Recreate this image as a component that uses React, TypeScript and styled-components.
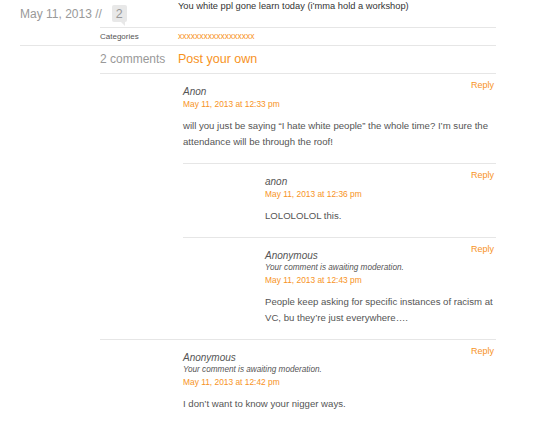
import React from 'react';
import styled, { createGlobalStyle } from 'styled-components';

const GlobalStyle = createGlobalStyle`
  body {
    margin: 0;
    background: #fff;
    font-family: "Liberation Sans", Arial, sans-serif;
    color: #555;
  }
`;

const orange = '#f7931e';
const rule = '#e6e6e6';

const Page = styled.div`
  width: 476px;
  margin-left: 20px;
`;

const PostBlock = styled.div`
  border-bottom: 1px solid ${rule};
`;

const PostHeader = styled.div`
  display: grid;
  grid-template-columns: 158px 1fr;
  height: 27px;
`;

const DateLine = styled.div`
  display: flex;
  align-items: center;
  gap: 10px;
`;

const PostDate = styled.span`
  font-size: 12px;
  color: #999;
`;

const Badge = styled.span`
  position: relative;
  display: inline-flex;
  align-items: center;
  justify-content: center;
  width: 15px;
  height: 17px;
  background: #e8e8e8;
  border-radius: 2px;
  font-size: 12.5px;
  color: #999;

  &::after {
    content: '';
    position: absolute;
    right: 2px;
    bottom: -4px;
    border-top: 4px solid #e8e8e8;
    border-left: 4px solid transparent;
  }
`;

const PostTitle = styled.div`
  font-size: 9.3px;
  line-height: 12px;
  color: #333;
`;

const MetaRow = styled.div<{ $height: number }>`
  display: grid;
  grid-template-columns: 78px 1fr;
  margin-left: 80px;
  border-top: 1px solid ${rule};
  height: ${({ $height }) => $height}px;
  line-height: ${({ $height }) => $height}px;
`;

const MetaLabel = styled.span<{ $size: number }>`
  font-size: ${({ $size }) => $size}px;
  color: ${({ $size }) => ($size > 10 ? '#999' : '#555')};
`;

const MetaValue = styled.span<{ $size: number }>`
  font-size: ${({ $size }) => $size}px;
  color: ${orange};
`;

const CommentsHeader = styled.div`
  display: grid;
  grid-template-columns: 78px 1fr;
  margin-left: 80px;
  height: 27px;
  line-height: 27px;
  border-bottom: 1px solid ${rule};
`;

const CommentList = styled.div`
  margin-left: 80px;
`;

const Thread = styled.div`
  padding-left: 83px;
  border-bottom: 1px solid ${rule};

  &:last-child {
    border-bottom: none;
  }
`;

const ChildComment = styled.div`
  border-top: 1px solid ${rule};
  padding-left: 82px;
`;

const CommentBox = styled.div`
  padding: 5px 0 13px;
`;

const CommentHead = styled.div`
  display: flex;
  justify-content: space-between;
  align-items: flex-start;
`;

const Meta = styled.div`
  padding-top: 6px;
  display: flex;
  flex-direction: column;
`;

const Author = styled.span`
  font-size: 10px;
  line-height: 13px;
  font-style: italic;
  color: #555;
`;

const Moderation = styled.span`
  font-size: 8.2px;
  line-height: 12px;
  font-style: italic;
  color: #555;
`;

const Stamp = styled.span`
  font-size: 8.4px;
  line-height: 12px;
  color: ${orange};
`;

const Reply = styled.span`
  font-size: 9px;
  line-height: 12px;
  color: ${orange};
  margin-right: 2px;
`;

const Body = styled.p`
  margin: 8px 0 0;
  font-size: 9.6px;
  line-height: 16px;
  color: #555;
`;

type CommentData = {
  author: string;
  pending?: boolean;
  date: string;
  text: string;
};

const Comment: React.FC<{ c: CommentData }> = ({ c }) => (
  <CommentBox>
    <CommentHead>
      <Meta>
        <Author>{c.author}</Author>
        {c.pending && <Moderation>Your comment is awaiting moderation.</Moderation>}
        <Stamp>{c.date}</Stamp>
      </Meta>
      <Reply>Reply</Reply>
    </CommentHead>
    <Body>{c.text}</Body>
  </CommentBox>
);

const threads: { root: CommentData; children: CommentData[] }[] = [
  {
    root: {
      author: 'Anon',
      date: 'May 11, 2013 at 12:33 pm',
      text: 'will you just be saying \u201cI hate white people\u201d the whole time? I\u2019m sure the attendance will be through the roof!',
    },
    children: [
      { author: 'anon', date: 'May 11, 2013 at 12:36 pm', text: 'LOLOLOLOL this.' },
      {
        author: 'Anonymous',
        pending: true,
        date: 'May 11, 2013 at 12:43 pm',
        text: 'People keep asking for specific instances of racism at VC, bu they\u2019re just everywhere\u2026.',
      },
    ],
  },
  {
    root: {
      author: 'Anonymous',
      pending: true,
      date: 'May 11, 2013 at 12:42 pm',
      text: 'I don\u2019t want to know your nigger ways.',
    },
    children: [],
  },
];

export default function App() {
  return (
    <Page>
      <GlobalStyle />
      <PostBlock>
        <PostHeader>
          <DateLine>
            <PostDate>May 11, 2013 //</PostDate>
            <Badge>2</Badge>
          </DateLine>
          <PostTitle>You white ppl gone learn today (i&rsquo;mma hold a workshop)</PostTitle>
        </PostHeader>
        <MetaRow $height={17}>
          <MetaLabel $size={8}>Categories</MetaLabel>
          <MetaValue $size={8.5}>xxxxxxxxxxxxxxxxxx</MetaValue>
        </MetaRow>
      </PostBlock>
      <CommentsHeader>
        <MetaLabel $size={12}>2 comments</MetaLabel>
        <MetaValue $size={12.5}>Post your own</MetaValue>
      </CommentsHeader>
      <CommentList>
        {threads.map((t, i) => (
          <Thread key={i}>
            <Comment c={t.root} />
            {t.children.map((ch, j) => (
              <ChildComment key={j}>
                <Comment c={ch} />
              </ChildComment>
            ))}
          </Thread>
        ))}
      </CommentList>
    </Page>
  );
}
